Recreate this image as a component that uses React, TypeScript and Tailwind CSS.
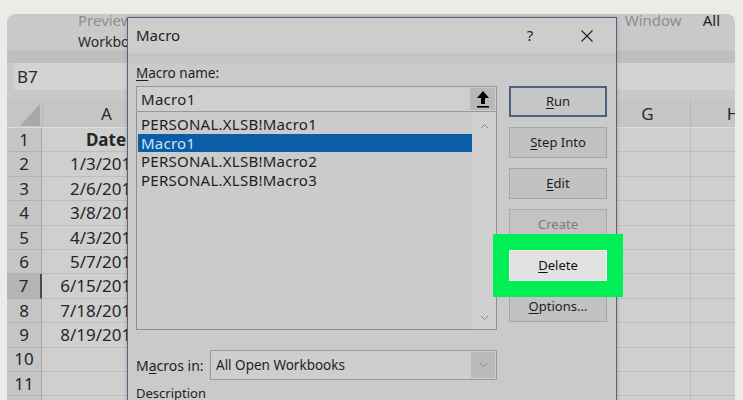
const rows = [
  { n: 1, v: 'Date', bold: true },
  { n: 2, v: '1/3/2018' },
  { n: 3, v: '2/6/2018' },
  { n: 4, v: '3/8/2018' },
  { n: 5, v: '4/3/2018' },
  { n: 6, v: '5/7/2018' },
  { n: 7, v: '6/15/2018', selected: true },
  { n: 8, v: '7/18/2018' },
  { n: 9, v: '8/19/2018' },
  { n: 10, v: '' },
  { n: 11, v: '' },
  { n: 12, v: '' },
];

const macros = ['PERSONAL.XLSB!Macro1', 'Macro1', 'PERSONAL.XLSB!Macro2', 'PERSONAL.XLSB!Macro3'];

const Chevron = ({ down = false }: { down?: boolean }) => (
  <svg width="9" height="6" viewBox="0 0 9 6" className="text-[#8a8a8a]">
    <polyline
      points={down ? '1,1 4.5,4.5 8,1' : '1,5 4.5,1.5 8,5'}
      fill="none"
      stroke="currentColor"
      strokeWidth="1"
    />
  </svg>
);

const DialogButton = ({
  label,
  hot,
  rest,
  variant = 'normal',
}: {
  label?: string;
  hot: string;
  rest: string;
  variant?: 'normal' | 'default' | 'disabled' | 'active';
}) => {
  const base = 'h-[31px] w-[98px] flex items-center justify-center text-[13px]';
  const styles = {
    normal: 'border border-[#a6a6a6] bg-[#c2c2c2] text-[#1c1c1c]',
    default: 'border-2 border-[#4e5f80] bg-[#c6c6c6] text-[#1c1c1c]',
    disabled: 'border border-[#a9a9a9] bg-[#c3c3c3] text-[#7b7b7b]',
    active:
      'relative z-10 border border-[#f2f2f2] bg-[#e2e2e2] text-[#111] outline-16 outline-[#00ef55]',
  };
  return (
    <div className={`${base} ${styles[variant]}`}>
      {label ?? (
        <span>
          <span className="underline underline-offset-2">{hot}</span>
          {rest}
        </span>
      )}
    </div>
  );
};

export default function App() {
  return (
    <div className="w-[743px] h-[400px] overflow-hidden bg-[#ecebe7] pt-[14px] pl-[7px] pr-[8px] font-['Noto_Sans','Open_Sans',sans-serif]">
      <div className="relative h-[386px] rounded-t-[8px] bg-[#c9c9c9] overflow-hidden flex flex-col">
        {/* Ribbon */}
        <div className="h-[37px] shrink-0 overflow-hidden">
          <div className="-mt-[2px] h-[17px] leading-[17px] text-[15px] flex pl-[71px] pr-[15px]">
            <span className="text-[#8f8f8f]">Preview</span>
            <span className="flex-1" />
            <span className="text-[#8f8f8f]">Window</span>
            <span className="ml-[21px] text-[#222]">All</span>
          </div>
          <div className="mt-[4px] h-[17px] leading-[17px] text-[14px] pl-[71px] text-[#2a2a2a]">
            Workbook Views
          </div>
        </div>
        <div className="h-[12px] shrink-0 bg-[#bebebe]" />

        {/* Formula bar */}
        <div className="h-[27px] shrink-0 flex pl-[7px] gap-[40px]">
          <div className="w-[150px] bg-[#d3d3d3] text-[17px] leading-[27px] pl-[3px] text-[#2a2a2a]">
            B7
          </div>
          <div className="flex-1 bg-[#d3d3d3]" />
        </div>
        <div className="h-[10px] shrink-0" />

        {/* Column headers */}
        <div className="h-[28px] shrink-0 flex bg-[#c5c5c5] border-b border-[#dcdcdc] text-[17px] text-[#2a2a2a]">
          <div className="w-[35px] shrink-0 flex items-end justify-end pr-[2px] pb-[1px]">
            <svg width="20" height="22" viewBox="0 0 20 22">
              <polygon points="20,0 20,22 0,22" fill="#a9a9a9" />
            </svg>
          </div>
          <div className="w-[128px] shrink-0 flex items-center justify-center border-l border-[#b8b8b8]">A</div>
          {['B', 'C', 'D', 'E', 'F'].map((c) => (
            <div key={c} className="w-[87px] shrink-0 flex items-center justify-center border-l border-[#b8b8b8]">
              {c}
            </div>
          ))}
          <div className="w-[85px] shrink-0 flex items-center justify-center">G</div>
          <div className="w-[85px] shrink-0 flex items-center justify-center border-l border-[#b5b5b5]">H</div>
        </div>

        {/* Rows */}
        <div className="flex flex-col">
          {rows.map((r) => (
            <div key={r.n} className="h-[24.4px] shrink-0 flex text-[17px] text-[#262626]">
              <div
                className={`w-[35px] shrink-0 flex items-center justify-center border-b border-[#b3b3b3] ${
                  r.selected ? 'bg-[#b4b4b4] border-r-2 border-r-[#4a4a4a]' : 'bg-[#c5c5c5] border-r border-r-[#a9a9a9]'
                }`}
              >
                {r.n}
              </div>
              <div
                className={`w-[128px] shrink-0 flex items-center border-b border-[#bcbcbc] bg-[#cfcfcf] ${
                  r.bold ? 'justify-center font-bold' : 'justify-end pr-[29px]'
                }`}
              >
                {r.v}
              </div>
              <div className="w-[435px] shrink-0 border-b border-[#bcbcbc] bg-[#cfcfcf]" />
              <div className="w-[85px] shrink-0 border-b border-[#bcbcbc] bg-[#cfcfcf]" />
              <div className="w-[85px] shrink-0 border-b border-l border-[#bcbcbc] bg-[#cfcfcf]" />
            </div>
          ))}
        </div>

        {/* Macro dialog */}
        <div className="absolute left-[120px] top-[3px] w-[490px] h-[400px] bg-[#cacaca] border border-[#56617f] shadow-[0_0_4px_rgba(0,0,0,0.2)] flex flex-col text-[#1e1e1e]">
          <div className="h-[35px] shrink-0 flex items-center pl-[8px] bg-[#cdcdcd]">
            <span className="text-[15px]">Macro</span>
            <span className="flex-1" />
            <span className="text-[15px] w-[20px] text-center">?</span>
            <span className="w-[58px] flex justify-center ml-[18px]">
              <svg width="12" height="12" viewBox="0 0 12 12">
                <path d="M0.5 0.5 L11.5 11.5 M11.5 0.5 L0.5 11.5" stroke="#222" strokeWidth="1.1" />
              </svg>
            </span>
          </div>
          <div className="h-[11px] shrink-0 bg-gradient-to-b from-[#c3c3c3] to-[#c6c6c6]" />

          <div className="flex pl-[8px]">
            <div className="w-[361px] shrink-0 flex flex-col">
              <div className="h-[18px] leading-[18px] text-[13.5px]">
                <span className="underline underline-offset-2">M</span>acro name:
              </div>
              <div className="mt-[4px] h-[26px] border border-[#979797] bg-[#cfcfcf] flex items-center justify-between pl-[4px] pr-px text-[15px] tracking-[0.3px]">
                <span>Macro1</span>
                <div className="w-[25px] h-[22px] bg-[#b8b8b8] flex items-center justify-center">
                  <svg width="14" height="18" viewBox="0 0 14 18">
                    <polygon points="7,1 13,8 9,8 9,14 5,14 5,8 1,8" fill="#000" />
                    <rect x="1" y="16" width="12" height="1.6" fill="#000" />
                  </svg>
                </div>
              </div>
              <div className="h-[218px] border border-[#8f8f8f] border-t-0 bg-[#cbcbcb] flex">
                <div className="flex-1 pt-[3px] pl-px text-[15px] tracking-[0.25px]">
                  {macros.map((m) => (
                    <div
                      key={m}
                      className={`h-[18.5px] leading-[18.5px] pl-[3px] ${
                        m === 'Macro1' ? 'bg-[#0b5ea6] text-[#cfe2f4]' : ''
                      }`}
                    >
                      {m}
                    </div>
                  ))}
                </div>
                <div className="w-[24px] bg-[#d0d0d0] flex flex-col items-center justify-between pt-[11px] pb-[8px]">
                  <Chevron />
                  <Chevron down />
                </div>
              </div>
            </div>

            <div className="ml-[12px] pt-[22px] flex flex-col gap-[10px]">
              <DialogButton hot="R" rest="un" variant="default" />
              <DialogButton hot="S" rest="tep Into" />
              <DialogButton hot="E" rest="dit" />
              <DialogButton label="Create" hot="" rest="" variant="disabled" />
              <DialogButton hot="D" rest="elete" variant="active" />
              <DialogButton hot="O" rest="ptions..." />
            </div>
          </div>

          <div className="mt-[20px] pl-[8px] flex items-center">
            <div className="w-[74px] text-[14px]">
              M<span className="underline underline-offset-2">a</span>cros in:
            </div>
            <div className="w-[287px] h-[30px] border border-[#9a9a9a] bg-[#cecece] flex items-center">
              <span className="flex-1 pl-[5px] text-[13.5px]">All Open Workbooks</span>
              <div className="w-[24px] h-[26px] mr-px bg-[#bababa] flex items-center justify-center">
                <Chevron down />
              </div>
            </div>
          </div>
          <div className="mt-[4px] pl-[8px] text-[13px] leading-[18px]">Description</div>
        </div>
      </div>
    </div>
  );
}
